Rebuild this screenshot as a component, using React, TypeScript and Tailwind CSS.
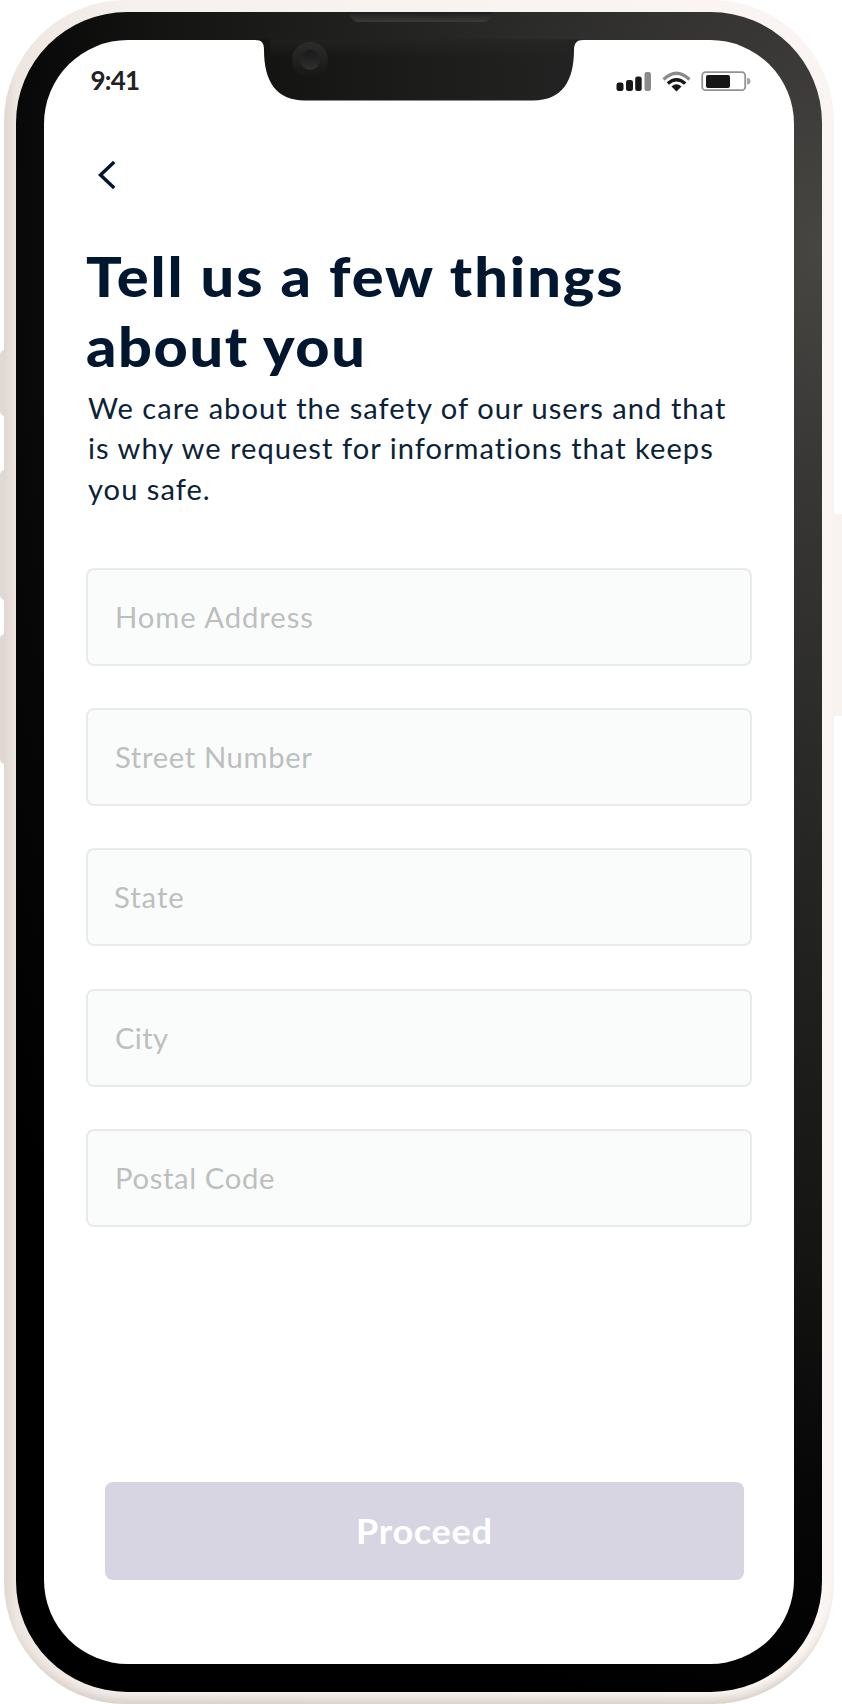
const fields = [
  { label: "Home Address", style: "tracking-[0.9px]" },
  { label: "Street Number", style: "tracking-[0.6px]" },
  { label: "State", style: "tracking-[0.9px] -ml-px" },
  { label: "City", style: "tracking-[0.3px]" },
  { label: "Postal Code", style: "tracking-[0.6px]" },
];

function StatusIcons() {
  return (
    <svg className="mt-[3px]" width="136" height="22" viewBox="0 0 136 22" fill="none">
      <rect x="0.500" y="11.500" width="7" height="8.500" rx="2.300" fill="#171717" />
      <rect x="10" y="9" width="7" height="11" rx="2.300" fill="#171717" />
      <rect x="19.200" y="5.500" width="6.500" height="14.500" rx="2.300" fill="#171717" />
      <rect x="28.500" y="1" width="6.500" height="19" rx="2.300" fill="#8b8b8b" />
      <path d="M47.500 8.500Q60.500 -4 73.500 8.500" stroke="#8b8b8b" strokeWidth="3.200" />
      <path d="M51.800 12.600Q60.500 5 69.200 12.600" stroke="#171717" strokeWidth="3.300" />
      <path d="M55.500 15.500Q60.500 11 65.500 15.500L60.500 20.500Z" fill="#171717" />
      <rect x="86.200" y="1.200" width="43" height="18" rx="3.500" stroke="#939393" strokeWidth="1.800" />
      <rect x="90" y="4" width="24" height="13" rx="2" fill="#171717" />
      <path d="M131 7Q134.500 7 134.500 10.200T131 13.500Z" fill="#a5a5a5" />
    </svg>
  );
}

function Notch() {
  return (
    <svg className="block" width="340" height="90" viewBox="250 12 340 90">
      <defs>
        <linearGradient id="notch" x1="0" x2="1" y1="0" y2="0">
          <stop offset="0" stopColor="#131311" />
          <stop offset="0.5" stopColor="#1c1c1a" />
          <stop offset="1" stopColor="#232323" />
        </linearGradient>
        <linearGradient id="shade" x1="0" x2="0" y1="0" y2="1">
          <stop offset="0" stopColor="#2c2b29" />
          <stop offset="1" stopColor="#2c2b29" stopOpacity="0" />
        </linearGradient>
        <linearGradient id="speaker" x1="0" x2="0" y1="0" y2="1">
          <stop offset="0" stopColor="#1d1d1d" />
          <stop offset="1" stopColor="#3a3a39" />
        </linearGradient>
        <linearGradient id="lens" x1="0" x2="0" y1="0" y2="1">
          <stop offset="0" stopColor="#2c2c2b" />
          <stop offset="1" stopColor="#161614" />
        </linearGradient>
        <linearGradient id="glass" x1="0" x2="0" y1="0" y2="1">
          <stop offset="0" stopColor="#191919" />
          <stop offset="1" stopColor="#303030" />
        </linearGradient>
      </defs>
      <path d="M255 39.500V40C262 40 264 43 264 50C264 81 276 100.500 305 100.500H533C562 100.500 574 81 574 50C574 43 577 40 583 40V39.500Z" fill="url(#notch)" />
      <path d="M270 39.500H568V58H270Z" fill="url(#shade)" opacity="0.5" />
      <path d="M350 12H492V17L486 22H356L350 17Z" fill="url(#speaker)" />
      <circle cx="310" cy="60" r="18" fill="url(#lens)" />
      <circle cx="310" cy="60" r="10" fill="url(#glass)" />
    </svg>
  );
}

export default function App() {
  return (
    <div className="relative h-[1704px] w-[842px] overflow-hidden bg-white px-1 font-['Lato',sans-serif]">
      <div className="absolute left-0 top-[350px] h-[66px] w-2 rounded-l-[5px] bg-[#e0d8d5]" />
      <div className="absolute left-0 top-[470px] h-[130px] w-2 rounded-l-[5px] bg-[#e0d8d3]" />
      <div className="absolute left-0 top-[634px] h-[130px] w-2 rounded-l-[5px] bg-[#e0d7d1]" />
      <div className="absolute left-[832px] top-[514px] h-[202px] w-[10px] bg-[#f8f3f0]" />

      <div className="relative h-[1704px] w-[830px] rounded-[122px] bg-[linear-gradient(90deg,#e0d7d2_0px,#eee6e1_12px,#f6f1ee_130px,#faf5f2_700px)] p-3 shadow-[inset_0_-12px_10px_-7px_#d6cdc6]">
        <div className="h-[1680px] w-[806px] rounded-[111px] bg-[radial-gradient(1000px_1500px_at_100%_14%,#484642_0%,#383736_15%,#262625_40%,#141413_68%,#070707_82%,#000_100%)] p-7">
          <main className="flex h-[1624px] w-[750px] flex-col rounded-[84px] bg-white">
            <header className="flex h-[80px] items-center justify-between pl-[46.500px] pr-[42.500px]">
              <span className="text-[26px] font-bold leading-8 tracking-[-0.800px] text-[#222]">9:41</span>
              <StatusIcons />
            </header>
            <button aria-label="Back" className="ml-[54px] mt-[40px] h-[30px] w-[18px]">
              <svg width="18" height="30" viewBox="0 0 18 30" fill="none">
                <path d="M16.200 2L2.500 15L16.200 28" stroke="#00172f" strokeWidth="3.400" />
              </svg>
            </button>
            <h1 className="ml-[42px] mt-[50.500px] origin-left scale-x-[1.08] whitespace-nowrap text-[55px] font-black leading-[70px] text-[#00172f]">
              <span className="block tracking-[1.800px]">Tell us a few things</span>
              <span className="block tracking-[1.500px]">about you</span>
            </h1>
            <p className="ml-[44px] mt-[7.500px] origin-left scale-x-[1.038] whitespace-nowrap text-[28px] leading-[40.300px] tracking-[1px] text-[#0b2239]">
              <span className="block">We care about the safety of our users and that</span>
              <span className="block">is why we request for informations that keeps</span>
              <span className="block">you safe.</span>
            </p>
            <form className="ml-[42px] mt-[59px] flex w-[666px] flex-col gap-[42.300px]">
              {fields.map(({ label, style }) => (
                <div key={label} className="flex h-[98px] items-center rounded-[8px] border-2 border-[#e9ebea] bg-[#fafcfb] pl-[27px]">
                  <span className={`origin-left scale-x-[1.045] text-[28px] text-[#bdbfbf] ${style}`}>{label}</span>
                </div>
              ))}
            </form>
            <button className="ml-[61px] mt-[254.500px] h-[98px] w-[639px] rounded-[8px] bg-[#d7d5e2] text-[35px] font-bold text-white">
              <span className="inline-block scale-x-[1.03] tracking-[0.700px]">Proceed</span>
            </button>
          </main>
        </div>
        <div className="absolute left-[246px] top-3">
          <Notch />
        </div>
      </div>
    </div>
  );
}
